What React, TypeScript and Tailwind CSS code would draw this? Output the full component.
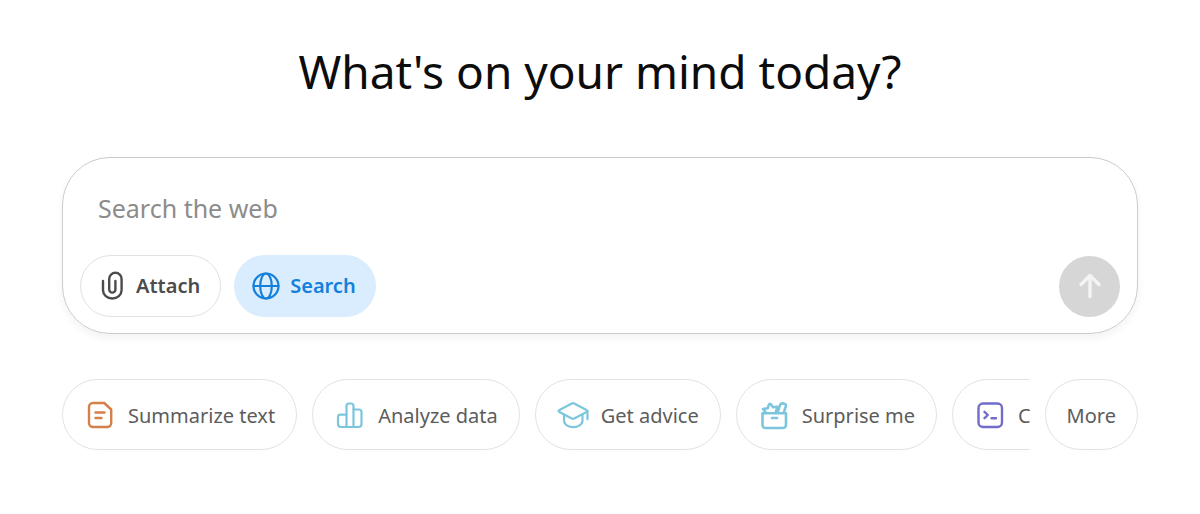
import { useState } from 'react';
import type { ReactNode } from 'react';

interface Suggestion {
  label: string;
  icon: ReactNode;
}

interface IconProps {
  className?: string;
  width?: number;
  children: ReactNode;
}

// Shared stroke settings for all the line icons
function Icon({ className = '', width = 2.2, children }: IconProps) {
  return (
    <svg
      viewBox="0 0 32 32"
      fill="none"
      stroke="currentColor"
      strokeWidth={width}
      strokeLinecap="round"
      strokeLinejoin="round"
      aria-hidden="true"
      className={`size-8 shrink-0 ${className}`}
    >
      {children}
    </svg>
  );
}

const suggestions: Suggestion[] = [
  {
    label: 'Summarize text',
    icon: (
      <Icon className="text-[#d3804a]" width={2.4}>
        <path d="M9 3h11.200l7 6.500v13.500a4 4 0 0 1-4 4H9a4 4 0 0 1-4-4V7a4 4 0 0 1 4-4z" />
        <path d="M11.500 12.500h9M11.500 18h6" />
      </Icon>
    ),
  },
  {
    label: 'Analyze data',
    icon: (
      <Icon className="text-[#7cc6dd]">
        <path d="M12.500 27H7a3 3 0 0 1-3-3v-6.800a2.500 2.500 0 0 1 2.500-2.500h6" />
        <path d="M12.500 27V6A2.500 2.500 0 0 1 15 3.500h2A2.500 2.500 0 0 1 19.500 6v21z" />
        <path d="M19.500 9.500H25a2.500 2.500 0 0 1 2.500 2.500v12a3 3 0 0 1-3 3h-5" />
      </Icon>
    ),
  },
  {
    label: 'Get advice',
    icon: (
      <Icon className="text-[#7cc6dd]">
        <path d="M2 10.300 14.800 3.500q1.200-.6 2.400 0L30 10.300q1 .7 0 1.400l-12.800 6.800q-1.200.6-2.400 0L2 11.700q-1-.7 0-1.400z" />
        <path d="M7 15v5.300c0 9 18.500 9 18.500 0V15M30.500 11.500v7.800" />
      </Icon>
    ),
  },
  {
    label: 'Surprise me',
    icon: (
      <Icon className="text-[#7cc6dd]" width={2.600}>
        <path d="M4.500 13.200H28v11.800a3 3 0 0 1-3 3H7.500a3 3 0 0 1-3-3z" />
        <path d="M14 18h5" />
        <path d="M8 12.800 5 9l4.800-.8q1.200-5.600 2.800-4.200l2.400 3.200 4.400-.4-1.800 6" />
        <path d="M19.500 12.500l2.500-7.300q.6-2 2.500-1.800l1.800.3q2.200.4 1.500 2.600L25.800 12.500" />
      </Icon>
    ),
  },
  {
    label: 'Code',
    icon: (
      <Icon className="text-[#706dcb]" width={2.4}>
        <rect x="4.500" y="3.500" width="23.500" height="23.500" rx="4.500" />
        <path d="m10.500 11.800 3.300 3.200-3.300 3.200M17.500 18.200h4.500" />
      </Icon>
    ),
  },
];

const chipClass =
  'flex h-[71px] shrink-0 items-center whitespace-nowrap rounded-full border border-[#e2e2e2] px-[21px] pt-0.5 text-[20px] leading-8 text-[#5c5c5c] hover:bg-gray-50';

export default function App() {
  const [query, setQuery] = useState('');
  const [searchOn, setSearchOn] = useState(true);

  return (
    <main className="min-h-screen bg-white px-[62px] pt-10 pb-16 font-['Noto_Sans','Open_Sans',sans-serif]">
      <h1 className="text-center text-[46px] leading-[62px] text-[#0c0c0c]">What's on your mind today?</h1>

      {/* Composer */}
      <form
        onSubmit={(e) => e.preventDefault()}
        className="mt-[55px] rounded-[48px] border border-[#cbcbcb] px-[17px] pt-7 pb-4 shadow-[0_4px_8px_rgba(0,0,0,0.05)]"
      >
        <input
          type="text"
          aria-label="Search the web"
          value={query}
          onChange={(e) => setQuery(e.target.value)}
          placeholder="Search the web"
          className="block h-11 w-full bg-transparent px-[18px] text-[25px] leading-10 text-[#333] outline-none placeholder:text-[#8c8c8c]"
        />

        <div className="mt-[25px] flex items-center gap-[13px]">
          <button
            type="button"
            className="flex h-[62px] items-center gap-2 rounded-full border border-[#e2e2e2] pr-5 pl-[15px] text-[20px] font-semibold text-[#4c4c4c]"
          >
            <Icon width={2.4}>
              <path d="M7 11v9.300a9.300 8.200 0 0 0 18.600 0V9a6.200 6.200 0 0 0-12.400 0v10.500a3.100 3.100 0 0 0 6.200 0V11" />
            </Icon>
            Attach
          </button>
          <button
            type="button"
            aria-pressed={searchOn}
            onClick={() => setSearchOn(!searchOn)}
            className={`flex h-[62px] items-center gap-2 rounded-full pr-5 pl-4 text-[20px] font-semibold ${
              searchOn ? 'bg-[#daedfe] text-[#1480dc]' : 'bg-white text-[#4c4c4c]'
            }`}
          >
            <Icon>
              <circle cx="16" cy="16" r="12.500" />
              <ellipse cx="16" cy="16" rx="5.800" ry="12.500" />
              <path d="M3.500 16h25" />
            </Icon>
            Search
          </button>
          <button
            type="submit"
            aria-label="Send"
            className="ml-auto flex size-[61px] items-center justify-center rounded-full bg-[#d6d6d6] text-[#f4f4f4]"
          >
            <Icon width={3.4}>
              <path d="M16 26.500V6M7 14.500l9-9 9 9" />
            </Icon>
          </button>
        </div>
      </form>

      {/* Suggestions, the row is cut off before the More button */}
      <div className="mt-[45px] flex gap-[15px]">
        <div className="flex min-w-0 flex-1 gap-[15px] overflow-hidden">
          {suggestions.map((s) => (
            <button key={s.label} type="button" className={`${chipClass} gap-3`}>
              {s.icon}
              {s.label}
            </button>
          ))}
        </div>
        <button type="button" className={chipClass}>
          More
        </button>
      </div>
    </main>
  );
}
